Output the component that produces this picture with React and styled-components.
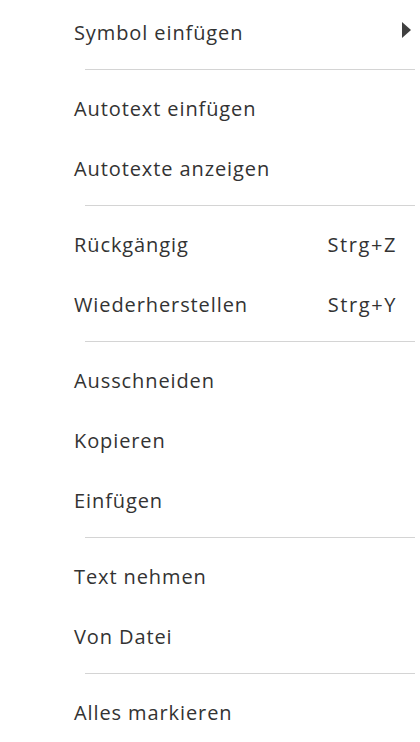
import styled, { createGlobalStyle } from 'styled-components';

const GlobalStyle = createGlobalStyle`
  html, body {
    margin: 0;
    padding: 0;
    background: #ffffff;
  }
  body {
    font-family: 'Open Sans', 'Noto Sans', sans-serif;
  }
`;

const groups = [
  [{ label: 'Symbol einfügen', submenu: true }],
  [{ label: 'Autotext einfügen' }, { label: 'Autotexte anzeigen' }],
  [
    { label: 'Rückgängig', shortcut: 'Strg+Z' },
    { label: 'Wiederherstellen', shortcut: 'Strg+Y' },
  ],
  [{ label: 'Ausschneiden' }, { label: 'Kopieren' }, { label: 'Einfügen' }],
  [{ label: 'Text nehmen' }, { label: 'Von Datei' }],
  [{ label: 'Alles markieren' }],
];

export default function App() {
  return (
    <>
      <GlobalStyle />
      <Menu>
        {groups.map((group, gi) => (
          <Group key={gi}>
            {gi > 0 && <Separator />}
            {group.map((item) => (
              <Item key={item.label}>
                <Label>{item.label}</Label>
                {item.shortcut && <Shortcut>{item.shortcut}</Shortcut>}
                {item.submenu && (
                  <Arrow viewBox="0 0 9 16">
                    <path d="M0 0 L9 8 L0 16 Z" fill="#404040" />
                  </Arrow>
                )}
              </Item>
            ))}
          </Group>
        ))}
      </Menu>
    </>
  );
}

const Menu = styled.div`
  width: 420px;
  height: 742px;
  box-sizing: border-box;
  padding-top: 2px;
  background: #ffffff;
  overflow: hidden;
`;

const Group = styled.div`
  display: flex;
  flex-direction: column;
`;

const Separator = styled.div`
  height: 16px;
  &::after {
    content: '';
    display: block;
    margin: 7px 5px 0 85px;
    height: 1px;
    background: #d4d4d4;
  }
`;

const Item = styled.div`
  height: 60px;
  display: flex;
  align-items: center;
  padding: 0 23px 0 74px;
  color: #333333;
  font-size: 20px;
  letter-spacing: 0.9px;
  position: relative;
`;

const Label = styled.span`
  flex: 1;
`;

const Shortcut = styled.span`
  white-space: nowrap;
  letter-spacing: 1.6px;
`;

const Arrow = styled.svg`
  position: absolute;
  right: 9px;
  top: 20px;
  width: 9px;
  height: 16px;
`;
